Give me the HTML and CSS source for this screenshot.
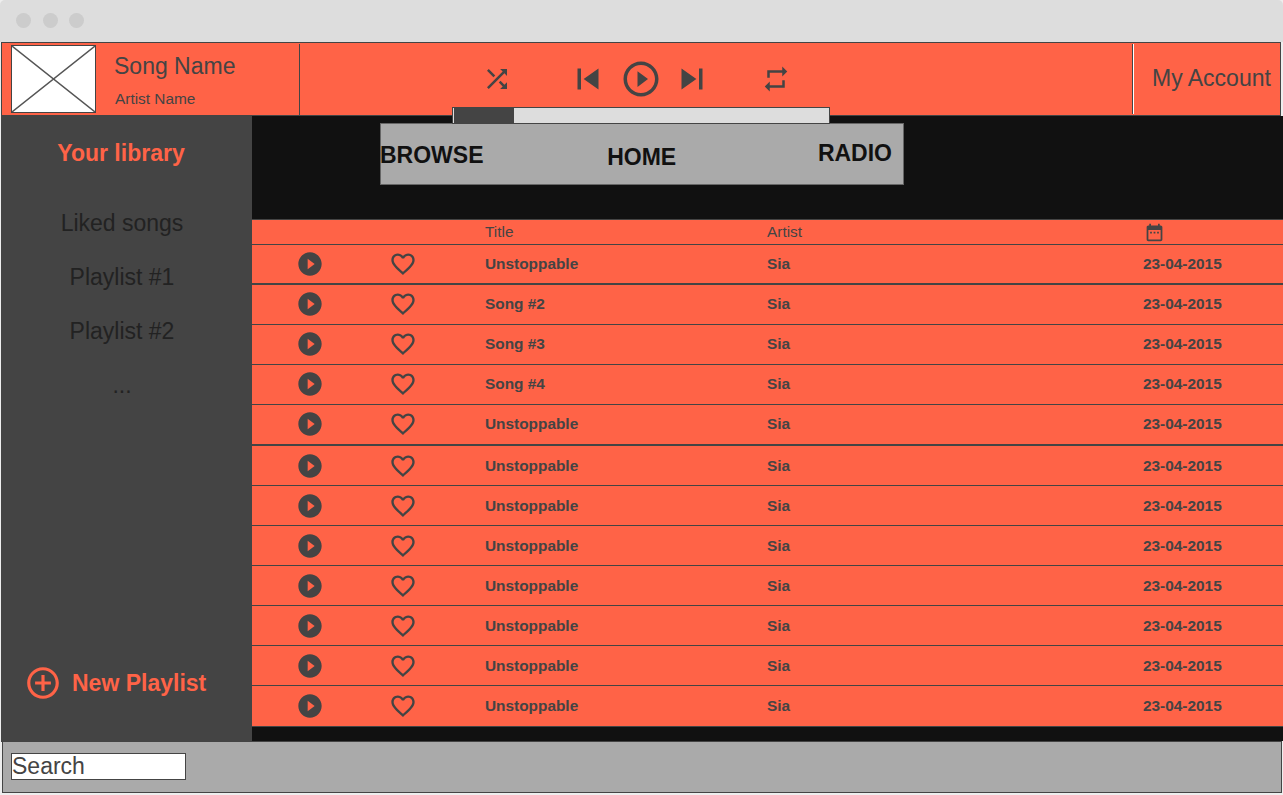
FILE: index.html
```html
<!DOCTYPE html>
<html lang="en">
<head>
<meta charset="utf-8">
<title>Music player</title>
<link rel="stylesheet" href="styles.css">
</head>
<body>
<svg class="sprites" width="0" height="0" aria-hidden="true">
  <symbol id="i-shuffle" viewBox="0 0 24 24"><path d="M10.59 9.17L5.41 4 4 5.41l5.17 5.17 1.42-1.41zM14.5 4l2.04 2.04L4 18.59 5.41 20 17.96 7.46 20 9.5V4h-5.5zm.33 9.41l-1.41 1.41 3.13 3.13L14.5 20H20v-5.5l-2.04 2.04-3.13-3.13z"/></symbol>
  <symbol id="i-prev" viewBox="0 0 24 24"><path d="M6 6h2v12H6zm3.5 6l8.5 6V6z"/></symbol>
  <symbol id="i-next" viewBox="0 0 24 24"><path d="M6 18l8.5-6L6 6v12zM16 6v12h2V6h-2z"/></symbol>
  <symbol id="i-play-o" viewBox="0 0 24 24"><path d="M10 16.5l6-4.5-6-4.5v9zM12 2C6.48 2 2 6.48 2 12s4.48 10 10 10 10-4.48 10-10S17.52 2 12 2zm0 18c-4.41 0-8-3.59-8-8s3.59-8 8-8 8 3.59 8 8-3.59 8-8 8z"/></symbol>
  <symbol id="i-repeat" viewBox="0 0 24 24"><path d="M7 7h10v3l4-4-4-4v3H5v6h2V7zm10 10H7v-3l-4 4 4 4v-3h12v-6h-2v4z"/></symbol>
  <symbol id="i-play" viewBox="0 0 24 24"><path d="M12 2C6.48 2 2 6.48 2 12s4.48 10 10 10 10-4.48 10-10S17.52 2 12 2zm-2 14.5v-9l6 4.5-6 4.5z"/></symbol>
  <symbol id="i-heart" viewBox="0 0 24 24"><path d="M16.5 3c-1.74 0-3.41.81-4.5 2.09C10.91 3.81 9.24 3 7.5 3 4.42 3 2 5.42 2 8.5c0 3.78 3.4 6.86 8.55 11.54L12 21.35l1.45-1.32C18.6 15.36 22 12.28 22 8.5 22 5.42 19.58 3 16.5 3zm-4.4 15.55l-.1.1-.1-.1C7.14 14.24 4 11.39 4 8.5 4 6.5 5.5 5 7.5 5c1.54 0 3.04.99 3.57 2.36h1.87C13.46 5.99 14.96 5 16.5 5c2 0 3.5 1.5 3.5 3.5 0 2.89-3.14 5.74-7.9 10.05z"/></symbol>
  <symbol id="i-cal" viewBox="0 0 24 24"><path d="M9 11H7v2h2v-2zm4 0h-2v2h2v-2zm4 0h-2v2h2v-2zm2-7h-1V2h-2v2H8V2H6v2H5c-1.11 0-1.99.9-1.99 2L3 20c0 1.1.89 2 2 2h14c1.1 0 2-.9 2-2V6c0-1.1-.9-2-2-2zm0 16H5V9h14v11z"/></symbol>
  <symbol id="i-add" viewBox="0 0 24 24"><path d="M13 7h-2v4H7v2h4v4h2v-4h4v-2h-4V7zm-1-5C6.48 2 2 6.48 2 12s4.48 10 10 10 10-4.48 10-10S17.52 2 12 2zm0 18c-4.41 0-8-3.59-8-8s3.59-8 8-8 8 3.59 8 8-3.59 8-8 8z"/></symbol>
</svg>

<div class="window">
  <div class="titlebar">
    <span class="dot"></span><span class="dot"></span><span class="dot"></span>
  </div>

  <header class="player">
    <div class="now-playing">
      <svg class="thumb" viewBox="0 0 85 68" preserveAspectRatio="none" aria-hidden="true">
        <path d="M0 0L85 68M85 0L0 68"/>
      </svg>
      <div class="track">
        <div class="track-name">Song Name</div>
        <div class="track-artist">Artist Name</div>
      </div>
    </div>
    <div class="controls">
      <svg class="ic-sm shuffle"><use href="#i-shuffle"/></svg>
      <svg class="ic-lg prev"><use href="#i-prev"/></svg>
      <svg class="ic-lg play"><use href="#i-play-o"/></svg>
      <svg class="ic-lg next"><use href="#i-next"/></svg>
      <svg class="ic-sm repeat"><use href="#i-repeat"/></svg>
    </div>
    <div class="account">My Account</div>
    <div class="progress"><div class="progress-fill"></div></div>
  </header>

  <div class="content">
    <aside class="sidebar">
      <div class="library">
        <h2 class="library-title">Your library</h2>
        <ul class="playlists">
          <li>Liked songs</li>
          <li>Playlist #1</li>
          <li>Playlist #2</li>
          <li>...</li>
        </ul>
      </div>
      <div class="new-playlist">
        <svg class="ic-add"><use href="#i-add"/></svg>
        <span>New Playlist</span>
      </div>
    </aside>

    <main class="main">
      <nav class="tabs">
        <span class="tab tab-browse">BROWSE</span>
        <span class="tab tab-home">HOME</span>
        <span class="tab tab-radio">RADIO</span>
      </nav>
      <div class="songs">
        <div class="row head">
          <span></span><span></span>
          <span class="title">Title</span>
          <span>Artist</span>
          <svg class="ic-cal"><use href="#i-cal"/></svg>
        </div>
        <div class="row thick">
          <svg class="ic-row"><use href="#i-play"/></svg><svg class="ic-row"><use href="#i-heart"/></svg>
          <span class="title">Unstoppable</span><span>Sia</span><span>23-04-2015</span>
        </div>
        <div class="row up">
          <svg class="ic-row"><use href="#i-play"/></svg><svg class="ic-row"><use href="#i-heart"/></svg>
          <span class="title">Song #2</span><span>Sia</span><span>23-04-2015</span>
        </div>
        <div class="row up">
          <svg class="ic-row"><use href="#i-play"/></svg><svg class="ic-row"><use href="#i-heart"/></svg>
          <span class="title">Song #3</span><span>Sia</span><span>23-04-2015</span>
        </div>
        <div class="row up">
          <svg class="ic-row"><use href="#i-play"/></svg><svg class="ic-row"><use href="#i-heart"/></svg>
          <span class="title">Song #4</span><span>Sia</span><span>23-04-2015</span>
        </div>
        <div class="row thick tall up">
          <svg class="ic-row"><use href="#i-play"/></svg><svg class="ic-row"><use href="#i-heart"/></svg>
          <span class="title">Unstoppable</span><span>Sia</span><span>23-04-2015</span>
        </div>
        <div class="row">
          <svg class="ic-row"><use href="#i-play"/></svg><svg class="ic-row"><use href="#i-heart"/></svg>
          <span class="title">Unstoppable</span><span>Sia</span><span>23-04-2015</span>
        </div>
        <div class="row">
          <svg class="ic-row"><use href="#i-play"/></svg><svg class="ic-row"><use href="#i-heart"/></svg>
          <span class="title">Unstoppable</span><span>Sia</span><span>23-04-2015</span>
        </div>
        <div class="row">
          <svg class="ic-row"><use href="#i-play"/></svg><svg class="ic-row"><use href="#i-heart"/></svg>
          <span class="title">Unstoppable</span><span>Sia</span><span>23-04-2015</span>
        </div>
        <div class="row">
          <svg class="ic-row"><use href="#i-play"/></svg><svg class="ic-row"><use href="#i-heart"/></svg>
          <span class="title">Unstoppable</span><span>Sia</span><span>23-04-2015</span>
        </div>
        <div class="row">
          <svg class="ic-row"><use href="#i-play"/></svg><svg class="ic-row"><use href="#i-heart"/></svg>
          <span class="title">Unstoppable</span><span>Sia</span><span>23-04-2015</span>
        </div>
        <div class="row">
          <svg class="ic-row"><use href="#i-play"/></svg><svg class="ic-row"><use href="#i-heart"/></svg>
          <span class="title">Unstoppable</span><span>Sia</span><span>23-04-2015</span>
        </div>
        <div class="row tall">
          <svg class="ic-row"><use href="#i-play"/></svg><svg class="ic-row"><use href="#i-heart"/></svg>
          <span class="title">Unstoppable</span><span>Sia</span><span>23-04-2015</span>
        </div>
      </div>
    </main>
  </div>

  <footer class="searchbar">
    <div class="search">Search</div>
  </footer>
</div>
</body>
</html>
```

FILE: styles.css
```css
* { box-sizing: border-box; }
html, body { margin: 0; height: 100%; }
body {
  background: #eeeeee;
  font-family: "Liberation Sans", Arial, sans-serif;
  color: #444444;
  overflow: hidden;
}
.sprites { position: absolute; }
svg { fill: currentColor; display: block; }

.window { width: 1283px; height: 795px; display: flex; flex-direction: column; }

.titlebar {
  height: 42px;
  flex: none;
  background: #dddddd;
  border-radius: 5px 5px 0 0;
  display: flex;
  align-items: center;
  gap: 12px;
  padding: 0 0 2px 16px;
}
.dot { width: 15px; height: 15px; border-radius: 50%; background: #cccccc; }
.dot:nth-child(3) { margin-left: -1px; }

.player {
  position: relative;
  z-index: 2;
  height: 74px;
  flex: none;
  margin-left: 1px;
  margin-right: 2px;
  background: #ff6347;
  border: 1px solid #444444;
  display: flex;
}
.now-playing {
  width: 298px;
  height: 72px;
  flex: none;
  margin-top: 1px;
  border-right: 1px solid #444444;
  padding: 1px 0 0 9px;
  display: flex;
  align-items: flex-start;
}
.thumb {
  width: 85px;
  height: 68px;
  flex: none;
  background: #ffffff;
  border: 1px solid #444444;
  fill: none;
}
.thumb path { stroke: #555555; stroke-width: 1.4; vector-effect: non-scaling-stroke; }
.track { margin-left: 18px; }
.track-name { font-size: 23px; line-height: 26px; margin-top: 8px; }
.track-artist { font-size: 15.4px; line-height: 18px; margin-top: 11px; margin-left: 1px; }

.controls {
  flex: 1;
  display: flex;
  align-items: center;
  padding: 0 0 0 182px;
}
.ic-sm { width: 30px; height: 30px; flex: none; }
.ic-lg { width: 42px; height: 42px; flex: none; }
.prev { margin-left: 55px; }
.play { margin-left: 11px; }
.next { margin-left: 9px; }
.repeat { margin-left: 48px; }

.account {
  width: 147px;
  height: 70px;
  flex: none;
  margin-top: 1px;
  border-left: 1px solid #ffffff;
  box-shadow: -1px 0 0 #444444;
  font-size: 23px;
  line-height: 68px;
  padding-left: 18px;
  white-space: nowrap;
}

.progress {
  position: absolute;
  left: 450px;
  top: 64px;
  width: 378px;
  height: 17px;
  background: #dddddd;
  border: 1px solid #444444;
  z-index: 3;
}
.progress-fill { width: 60px; height: 100%; margin-left: 1px; background: #444444; }

.content { flex: 1; display: flex; min-height: 0; }

.sidebar {
  position: relative;
  z-index: 3;
  width: 251px;
  margin: -1px 0 -1px 1px;
  flex: none;
  background: #444444;
  display: flex;
  flex-direction: column;
  justify-content: space-between;
}
.library-title {
  margin: 25px 0 0;
  font-size: 23px;
  line-height: 26px;
  font-weight: 700;
  color: #ff6347;
  text-align: center;
  padding-right: 11px;
}
.playlists {
  list-style: none;
  margin: 30px 0 0;
  padding: 0 9px 0 0;
  font-size: 23px;
  color: #222222;
  text-align: center;
}
.playlists li { height: 54px; line-height: 54px; }
.new-playlist {
  display: flex;
  align-items: center;
  gap: 10px;
  margin: 0 0 40px 23px;
  color: #ff6347;
  font-size: 23px;
  font-weight: 700;
}
.ic-add { width: 38px; height: 38px; }

.main {
  flex: 1;
  min-width: 0;
  background: #111111;
  padding-top: 7px;
}
.tabs {
  position: relative;
  width: 524px;
  height: 62px;
  margin-left: 128px;
  background: #aaaaaa;
  border: 1px solid #666666;
  display: flex;
  justify-content: space-between;
  color: #111111;
  font-size: 23px;
  font-weight: 700;
}
.tab { line-height: 26px; }
.tab-browse { margin: 18px 0 0 -1px; }
.tab-home { margin: 20px 18px 0 0; }
.tab-radio { margin: 16px 11px 0 0; }

.songs { margin-top: 34px; border-top: 1px solid #444444; }
.row {
  display: grid;
  grid-template-columns: 116px 69px 330px 376px 1fr;
  align-items: center;
  justify-items: start;
  height: 40px;
  background: #ff6347;
  border-bottom: 1px solid #444444;
  font-size: 15.4px;
  font-weight: 700;
  white-space: nowrap;
}
.row .title { padding-left: 48px; }
.head { height: 25px; font-weight: 400; padding-bottom: 2px; }
.thick { border-bottom-width: 2px; }
.tall { height: 41px; }
.up { padding-bottom: 1px; }
.ic-row { width: 28px; height: 28px; justify-self: center; }
.ic-cal { width: 21px; height: 21px; margin: 2px 0 0 1px; }

.searchbar {
  position: relative;
  z-index: 2;
  height: 52px;
  flex: none;
  margin: 0 1px 2px 2px;
  background: #aaaaaa;
  border: 1px solid #444444;
  padding: 11px 0 0 8px;
}
.search {
  width: 175px;
  height: 27px;
  background: #ffffff;
  border: 1px solid #444444;
  font-size: 23px;
  line-height: 25px;
}
```
